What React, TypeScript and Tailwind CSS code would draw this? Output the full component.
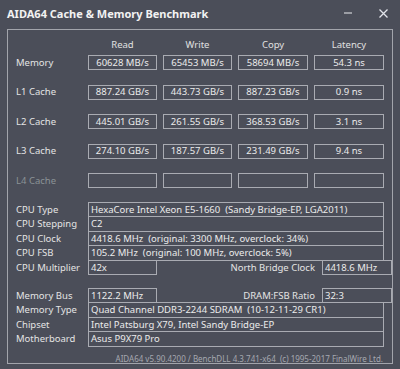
const benchRows = [
  { label: "Memory", values: ["60628 MB/s", "65453 MB/s", "58694 MB/s", "54.3 ns"] },
  { label: "L1 Cache", values: ["887.24 GB/s", "443.73 GB/s", "887.23 GB/s", "0.9 ns"] },
  { label: "L2 Cache", values: ["445.01 GB/s", "261.55 GB/s", "368.53 GB/s", "3.1 ns"] },
  { label: "L3 Cache", values: ["274.10 GB/s", "187.57 GB/s", "231.49 GB/s", "9.4 ns"] },
  { label: "L4 Cache", values: ["", "", "", ""], dim: true },
];

const cpuRows = [
  { label: "CPU Type", value: "HexaCore Intel Xeon E5-1660  (Sandy Bridge-EP, LGA2011)" },
  { label: "CPU Stepping", value: "C2" },
  { label: "CPU Clock", value: "4418.6 MHz  (original: 3300 MHz, overclock: 34%)" },
  { label: "CPU FSB", value: "105.2 MHz  (original: 100 MHz, overclock: 5%)" },
];

const memRows = [
  { label: "Memory Type", value: "Quad Channel DDR3-2244 SDRAM  (10-12-11-29 CR1)" },
  { label: "Chipset", value: "Intel Patsburg X79, Intel Sandy Bridge-EP" },
  { label: "Motherboard", value: "Asus P9X79 Pro" },
];

const grid = "grid grid-cols-[66px_69px_69px_70px_70px] gap-x-[6px]";
const box = "border border-[#a9abb2] text-[#ececec]";

function InfoRow({ label, value, first }: { label: string; value: string; first?: boolean }) {
  return (
    <div className={`flex h-[15.4px] ${first ? "" : "-mt-px"}`}>
      <div className="w-[72px] flex items-center text-[#e4e4e4]">{label}</div>
      <div className={`${box} w-[296px] flex items-center pl-[2px] whitespace-pre`}>{value}</div>
    </div>
  );
}

function SplitRow({ label, value, rightLabel, rightValue, first }: {
  label: string; value: string; rightLabel: string; rightValue: string; first?: boolean;
}) {
  return (
    <div className={`flex h-[15.4px] ${first ? "" : "-mt-px"}`}>
      <div className="w-[72px] flex items-center text-[#e4e4e4]">{label}</div>
      <div className={`${box} w-[69px] flex items-center pl-[2px]`}>{value}</div>
      <div className="flex-1 flex items-center justify-end pr-[7px] text-[#e4e4e4]">{rightLabel}</div>
      <div className={`${box} w-[70px] flex items-center pl-[2px]`}>{rightValue}</div>
    </div>
  );
}

export default function App() {
  return (
    <div className="w-[400px] h-[369px] bg-[#4b4e59] flex flex-col overflow-hidden font-['Noto_Sans',sans-serif] text-[9.5px] leading-none">
      <div className="h-[29px] pb-[3px] flex items-center justify-between pl-[7px] pr-[12px]">
        <span className="text-[11px] font-bold text-[#f2f2f2]">AIDA64 Cache &amp; Memory Benchmark</span>
        <div className="flex items-center gap-[27px]">
          <svg width="8" height="8" viewBox="0 0 8 8">
            <line x1="0" y1="4" x2="8" y2="4" stroke="#d0d2d8" strokeWidth="1.2" />
          </svg>
          <svg width="9" height="9" viewBox="0 0 9 9">
            <path d="M0.5 0.5 L8.5 8.5 M8.5 0.5 L0.5 8.5" stroke="#e2e4ea" strokeWidth="1.3" />
          </svg>
        </div>
      </div>

      <div className="mx-[7px] w-[386px] h-[335px] border border-[#a2a4ab] pl-[8px] pt-[9px] flex flex-col">
        <div className={`${grid} h-[11px] items-center text-[#e0e0e0]`}>
          <span />
          <span className="text-center">Read</span>
          <span className="text-center">Write</span>
          <span className="text-center">Copy</span>
          <span className="text-center">Latency</span>
        </div>

        <div className="mt-[5px] flex flex-col gap-y-[14.5px]">
          {benchRows.map((row) => (
            <div key={row.label} className={`${grid} h-[15px]`}>
              <span className={`flex items-center ${row.dim ? "text-[#8a9296]" : "text-[#e4e4e4]"}`}>{row.label}</span>
              {row.values.map((v, i) => (
                <div key={i} className={`${box} flex items-center justify-center`}>{v}</div>
              ))}
            </div>
          ))}
        </div>

        <div className="mt-[14px] flex flex-col">
          {cpuRows.map((r, i) => (
            <InfoRow key={r.label} label={r.label} value={r.value} first={i === 0} />
          ))}
          <SplitRow label="CPU Multiplier" value="42x" rightLabel="North Bridge Clock" rightValue="4418.6 MHz" />
        </div>

        <div className="mt-[13px] flex flex-col">
          <SplitRow label="Memory Bus" value="1122.2 MHz" rightLabel="DRAM:FSB Ratio" rightValue="32:3" first />
          {memRows.map((r) => (
            <InfoRow key={r.label} label={r.label} value={r.value} />
          ))}
        </div>

        <div className="mt-[8px] pr-[9px] text-right text-[8px] text-[#a6a8b0] whitespace-pre">
          AIDA64 v5.90.4200 / BenchDLL 4.3.741-x64  (c) 1995-2017 FinalWire Ltd.
        </div>
      </div>
    </div>
  );
}
